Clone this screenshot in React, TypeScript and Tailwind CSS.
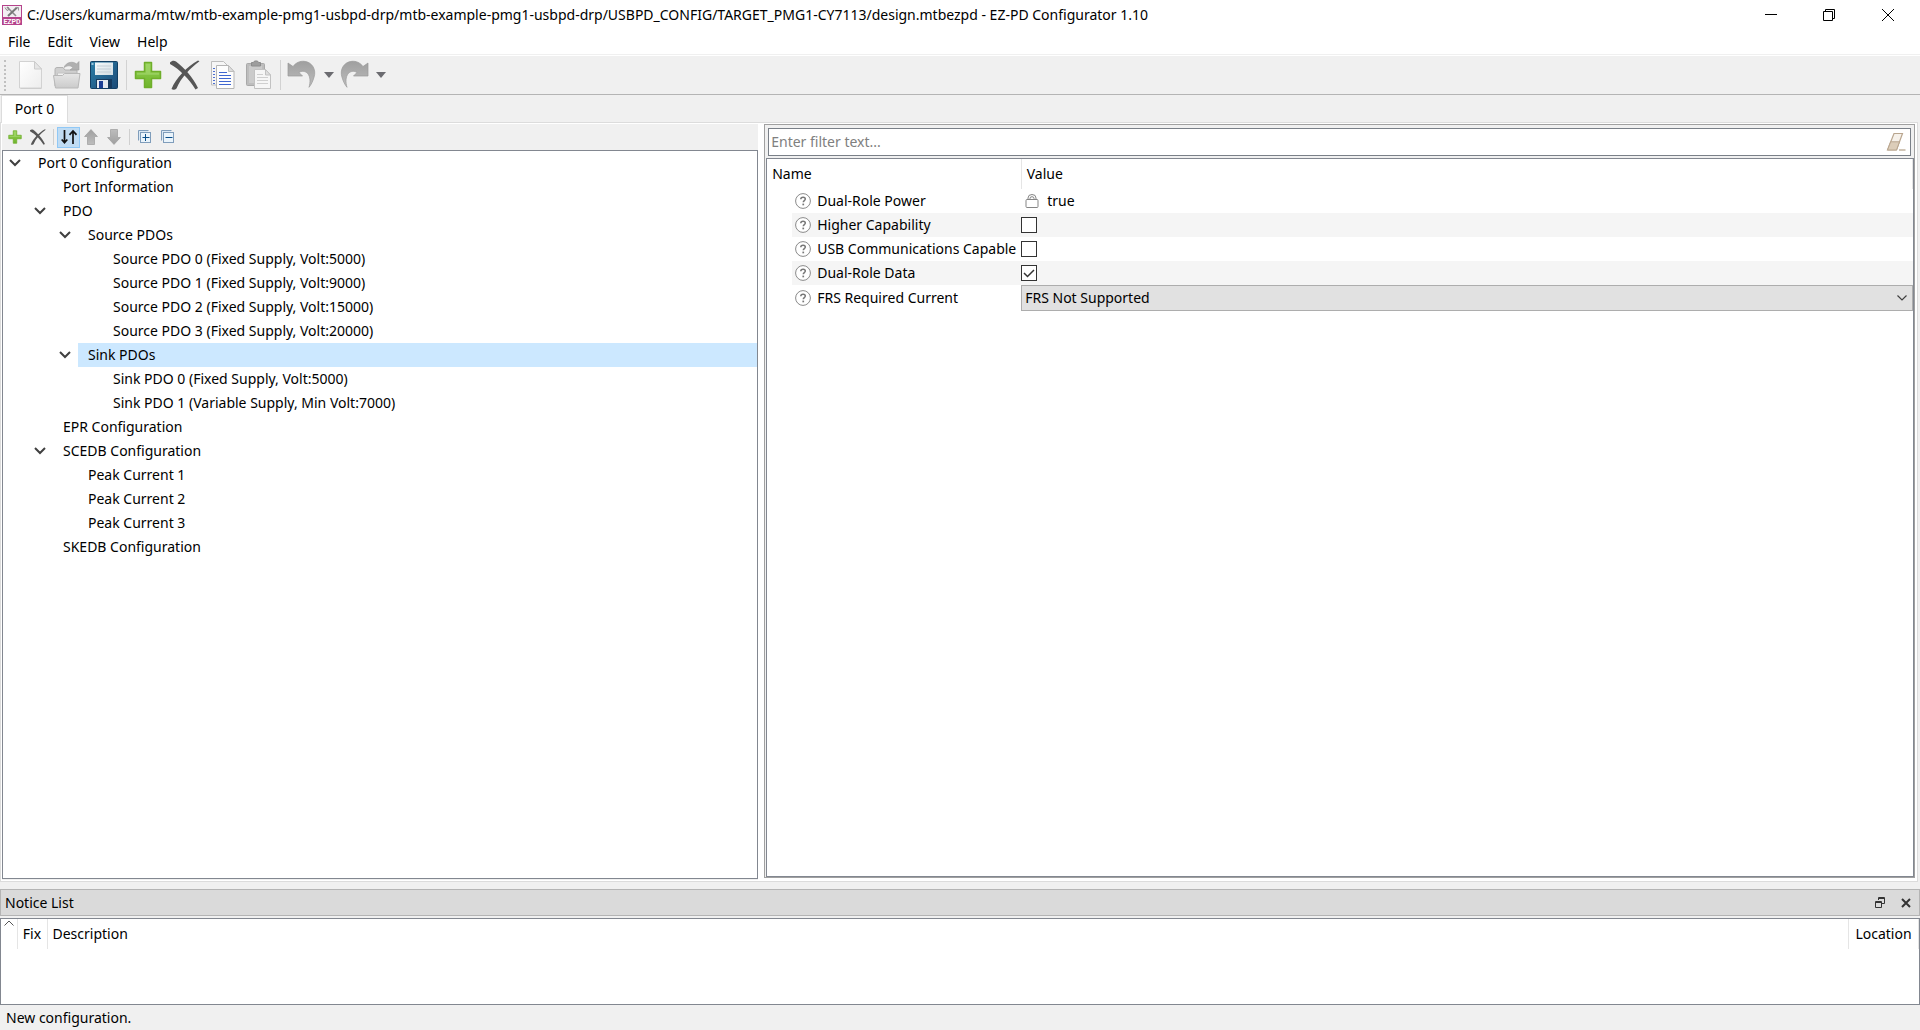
import React, { useState } from "react";

type Node = { label: string; children?: Node[]; open?: boolean };

const TREE: Node[] = [
  {
    label: "Port 0 Configuration",
    children: [
      { label: "Port Information" },
      {
        label: "PDO",
        children: [
          {
            label: "Source PDOs",
            children: [
              { label: "Source PDO 0 (Fixed Supply, Volt:5000)" },
              { label: "Source PDO 1 (Fixed Supply, Volt:9000)" },
              { label: "Source PDO 2 (Fixed Supply, Volt:15000)" },
              { label: "Source PDO 3 (Fixed Supply, Volt:20000)" },
            ],
          },
          {
            label: "Sink PDOs",
            children: [
              { label: "Sink PDO 0 (Fixed Supply, Volt:5000)" },
              { label: "Sink PDO 1 (Variable Supply, Min Volt:7000)" },
            ],
          },
        ],
      },
      { label: "EPR Configuration" },
      {
        label: "SCEDB Configuration",
        children: [{ label: "Peak Current 1" }, { label: "Peak Current 2" }, { label: "Peak Current 3" }],
      },
      { label: "SKEDB Configuration" },
    ],
  },
];

function AppLogo() {
  return (
    <svg width="20" height="20" viewBox="0 0 20 20" className="shrink-0" aria-hidden="true">
      <rect x="0.5" y="0.5" width="19" height="19" fill="#f3eef2" stroke="#b5438c" />
      <rect x="0" y="12" width="20" height="8" fill="#b5438c" />
      <path d="M5 2l9 9" stroke="#8a8a8a" strokeWidth="1.6" />
      <path d="M15 2.5L6 11" stroke="#777" strokeWidth="2" />
      <path d="M3 2.5l2 3 2-1-1-2.500" fill="none" stroke="#8a8a8a" />
      <path d="M13.500 2.500h3v3" fill="none" stroke="#999" />
      <text x="10" y="19" textAnchor="middle" fontSize="7" fontWeight="700" fill="#fff" fontFamily="Roboto, sans-serif">
        EZPD
      </text>
    </svg>
  );
}

function NewIcon() {
  return (
    <svg width="26" height="30" viewBox="0 0 26 30" aria-hidden="true">
      <path d="M2.500 2.500h15l6 6V29h-21z" fill="#c9c9c9" />
      <path d="M1.500 1.500h15l7 7.500v19h-22z" fill="url(#paper)" stroke="#d2d2d2" />
      <path d="M16.500 1.500v7.500h7z" fill="#e6e6e6" stroke="#cccccc" />
    </svg>
  );
}

function OpenIcon() {
  return (
    <svg width="30" height="30" viewBox="0 0 30 30" aria-hidden="true">
      <path d="M3 26V9.500q0-2 2-2h6l2 2.500h12v5" fill="#cfcfcf" stroke="#b2b2b2" />
      <path d="M5.500 13h19v5h-19z" fill="#f1f1f1" stroke="#c4c4c4" />
      <path d="M1.500 15.500h9l2-2h15.500l-2 14.500H3.500z" fill="url(#folder)" stroke="#b8b8b8" />
      <path d="M12 7.500C14 2 21 .8 24.500 4L27 1.500V10h-9l3-2.500C18.500 5 15 5.500 12 7.500z" fill="#b0b0b0" stroke="#9e9e9e" strokeWidth=".6" />
    </svg>
  );
}

function SaveIcon() {
  return (
    <svg width="28" height="28" viewBox="0 0 28 28" aria-hidden="true">
      <rect x=".5" y=".5" width="27" height="27" rx="1" fill="url(#disk)" stroke="#123f63" />
      <rect x="5" y="1.500" width="18" height="12.500" fill="url(#label)" />
      <path d="M7 5h14M7 8h14M7 11h14" stroke="#c3ced6" />
      <rect x="6" y="18" width="16" height="9" fill="#163a5e" />
      <path d="M7 19h11v8H7z" fill="#e4eaf0" />
      <rect x="9" y="20" width="4" height="7" fill="#1b3f95" />
      <rect x="1.500" y="2" width="2" height="2" fill="#9cc4dc" />
    </svg>
  );
}

function PlusIcon({ size }: { size: number }) {
  return (
    <svg width={size} height={size} viewBox="0 0 28 28" aria-hidden="true">
      <path d="M10.500 1.500h7v9h9v7h-9v9h-7v-9h-9v-7h9z" fill="url(#green)" stroke="#6fae2b" strokeWidth="1.500" strokeLinejoin="round" />
      <path d="M11.800 3h4.500v8.800H25v2H3v-2h8.800z" fill="#a6d873" opacity=".6" />
    </svg>
  );
}

function CrossIcon({ size }: { size: number }) {
  return (
    <svg width={size} height={size} viewBox="0 0 30 30" aria-hidden="true">
      <path d="M0 2.500C2 .5 4 .3 6 1.500c8 6 17 16 22 26.500l-2.500 1.500C19 19 10 9.500 0 4z" fill="#565656" />
      <path d="M28 .5l1.500.8C20 8.500 11 17.500 6.500 28.500 5 30 3 30 1.500 29 6 18 17 6.500 28 .5z" fill="#565656" />
    </svg>
  );
}

function CopyIcon() {
  return (
    <svg width="26" height="30" viewBox="0 0 26 30" aria-hidden="true">
      <path d="M1.500 1.500h12l4 4V25h-16z" fill="#f6f6f6" stroke="#bdbdbd" />
      <path d="M4 8v16" stroke="#4d6fd0" strokeWidth="2" strokeDasharray="1 2" />
      <path d="M6.500 5.500h12l5.500 6V28.500H6.500z" fill="#fdfdfd" stroke="#b5b5b5" />
      <path d="M18.500 5.500v6H24z" fill="#dedede" stroke="#bdbdbd" />
      <path d="M9 12.500h8M9 15.500h12M9 18.500h12M9 21.500h12M9 24.500h12" stroke="#3f66d0" />
    </svg>
  );
}

function PasteIcon() {
  return (
    <svg width="28" height="30" viewBox="0 0 28 30" aria-hidden="true">
      <rect x="1.500" y="3.500" width="18" height="22" rx="1" fill="#bdbdbd" stroke="#a9a9a9" />
      <rect x="4" y="6" width="13" height="17" fill="#cbcbcb" />
      <path d="M6.500 2.500h2l1-1.500h3l1 1.500h2V6h-9z" fill="#9d9d9d" stroke="#8c8c8c" />
      <path d="M9.500 9.500h11l5 5.500v13.500h-16z" fill="#f6f6f6" stroke="#c2c2c2" />
      <path d="M20.500 9.500V15h5z" fill="#dfdfdf" stroke="#c2c2c2" />
      <path d="M12 14.500h6M12 17.500h11M12 20.500h11M12 23.500h11" stroke="#cfcfcf" />
    </svg>
  );
}

function UndoIcon({ flip }: { flip?: boolean }) {
  return (
    <svg width="30" height="30" viewBox="0 0 30 30" aria-hidden="true">
      <g transform={flip ? "translate(30 0) scale(-1 1)" : undefined}>
        <path
          d="M1 3l5 3.500C9 2.500 13 1 17 1.300c8.500.7 12.500 8.700 10 16-1.200 4-2.800 7.500-5 10 1.500-5 1.500-10.500-1.300-13.800-2.500-2.500-6-2.800-8.700-1L15.500 16H1z"
          fill="url(#arrow)"
          stroke="#999"
          strokeWidth=".7"
        />
      </g>
    </svg>
  );
}

function Caret() {
  return (
    <svg width="10" height="6" viewBox="0 0 10 6" aria-hidden="true">
      <path d="M0 0h10L5 6z" fill="#6b6b70" />
    </svg>
  );
}

function SortIcon() {
  return (
    <svg width="16" height="16" viewBox="0 0 16 16" fill="none" stroke="#111" strokeWidth="1.700" aria-hidden="true">
      <path d="M3.500 1v13M.7 10.500l2.800 3.200 2.800-3.200" />
      <path d="M12 15V2M8.500 5.800L12 2l3.500 3.800" />
    </svg>
  );
}

function BlockArrow({ down }: { down?: boolean }) {
  return (
    <svg width="14" height="16" viewBox="0 0 14 16" aria-hidden="true">
      <path
        transform={down ? "translate(0 16) scale(1 -1)" : undefined}
        d="M7 .6L13.400 7.500H10.500v8h-7v-8H.6z"
        fill="url(#arrow)"
        stroke="#a3a3a3"
        strokeWidth=".8"
      />
    </svg>
  );
}

function FoldIcon({ plus }: { plus?: boolean }) {
  return (
    <svg width="14" height="14" viewBox="0 0 14 14" aria-hidden="true">
      <path d="M.5 10.500V.5h10" fill="none" stroke="#7f9dbb" />
      <path d="M1 1h9v2H3v7H1z" fill="#dbe8f3" />
      <rect x="2.500" y="2.500" width="10" height="10" fill="#eaf4fb" stroke="#7f9dbb" />
      <path d="M4.500 7.500h7" stroke="#0b4f8a" />
      {plus && <path d="M7.500 4v7" stroke="#0b4f8a" />}
    </svg>
  );
}

function Chevron({ open }: { open: boolean }) {
  return (
    <svg width="12" height="8" viewBox="0 0 12 8" fill="none" stroke="#404040" strokeWidth="2" className={open ? "" : "-rotate-90"} aria-hidden="true">
      <path d="M1 1l5 5 5-5" />
    </svg>
  );
}

function HelpIcon() {
  return (
    <svg width="16" height="16" viewBox="0 0 16 16" className="shrink-0" aria-hidden="true">
      <circle cx="8" cy="8" r="7.400" fill="#fff" stroke="#8a8a8a" strokeWidth="1" />
      <path d="M5.800 6.300c0-1.400 1-2.100 2.300-2.100 1.200 0 2.200.7 2.200 1.900 0 1.500-2 1.500-2 3.200" fill="none" stroke="#777" strokeWidth="1.500" />
      <rect x="7.400" y="10.600" width="1.700" height="1.700" fill="#777" />
    </svg>
  );
}

function LockIcon() {
  return (
    <svg width="14" height="14" viewBox="0 0 14 14" fill="none" stroke="#858585" aria-hidden="true">
      <path d="M3 5.500V4a4 3.500 0 018 0v1.500M5 5.500V4.500a2 1.800 0 014 0v1" />
      <rect x="1" y="5.500" width="12" height="8" rx="1" fill="#fff" />
    </svg>
  );
}

function EraserIcon() {
  return (
    <svg width="20" height="20" viewBox="0 0 20 20" aria-hidden="true">
      <path d="M8 1.500h8.500L10.500 18H1.500z" fill="#f6f1ea" stroke="#b9a68f" strokeWidth="1.200" />
      <path d="M4.700 9.800h8.800L10.500 18H1.500z" fill="#dccdb9" stroke="#b9a68f" />
      <path d="M13 18h6.500" stroke="#c2b39f" strokeWidth="1.500" />
    </svg>
  );
}

function ToolButton({ label, className, children }: { label: string; className: string; children: React.ReactNode }) {
  return (
    <button type="button" aria-label={label} className={`flex shrink-0 items-center justify-center ${className}`}>
      {children}
    </button>
  );
}

function TreeItem({ node, level, selected, onSelect }: { node: Node; level: number; selected: string; onSelect: (s: string) => void }) {
  const [open, setOpen] = useState(true);
  const isSelected = selected === node.label;
  return (
    <li role="treeitem" aria-selected={isSelected} aria-expanded={node.children ? open : undefined}>
      <div className="flex h-6">
        <div className="shrink-0" style={{ width: level * 25 }} />
        <div className="flex w-[25px] shrink-0">
          {node.children && (
            <button type="button" aria-label={`Toggle ${node.label}`} onClick={() => setOpen(!open)} className="flex w-6 items-center justify-center">
              <Chevron open={open} />
            </button>
          )}
        </div>
        <button
          type="button"
          onClick={() => onSelect(node.label)}
          className={`flex-1 px-2.5 text-left whitespace-nowrap ${isSelected ? "bg-[#cce8ff]" : ""}`}
        >
          {node.label}
        </button>
      </div>
      {node.children && open && (
        <ul role="group">
          {node.children.map((c) => (
            <TreeItem key={c.label} node={c} level={level + 1} selected={selected} onSelect={onSelect} />
          ))}
        </ul>
      )}
    </li>
  );
}

function CheckBox({ id, initial }: { id: string; initial: boolean }) {
  const [checked, setChecked] = useState(initial);
  return (
    <span className="relative block size-4">
      <input id={id} type="checkbox" checked={checked} onChange={() => setChecked(!checked)} className="block size-4 appearance-none border border-[#333333] bg-white" />
      {checked && (
        <svg width="16" height="16" viewBox="0 0 16 16" fill="none" stroke="#333" strokeWidth="1.500" className="pointer-events-none absolute inset-0" aria-hidden="true">
          <path d="M3 8l3.500 3.500L13 5" />
        </svg>
      )}
    </span>
  );
}

function NameCell({ label, id, shade }: { label: string; id?: string; shade?: boolean }) {
  return (
    <td className="p-0 pl-[25px]">
      <div className={`flex h-6 items-center gap-1.5 pl-[3px] whitespace-nowrap ${shade ? "bg-[#f5f5f5]" : ""}`}>
        <HelpIcon />
        {id ? <label htmlFor={id}>{label}</label> : <span>{label}</span>}
      </div>
    </td>
  );
}

function Gradients() {
  return (
    <svg width="0" height="0" className="absolute" aria-hidden="true">
      <defs>
        <linearGradient id="paper" x1="0" y1="0" x2="1" y2="1">
          <stop offset="0" stopColor="#ffffff" />
          <stop offset="1" stopColor="#ededed" />
        </linearGradient>
        <linearGradient id="folder" x1="0" y1="0" x2="0" y2="1">
          <stop offset="0" stopColor="#e6e6e6" />
          <stop offset="1" stopColor="#cbcbcb" />
        </linearGradient>
        <linearGradient id="disk" x1="0" y1="0" x2="1" y2="1">
          <stop offset="0" stopColor="#2c7fa8" />
          <stop offset="1" stopColor="#1b4a77" />
        </linearGradient>
        <linearGradient id="label" x1="0" y1="0" x2="1" y2="1">
          <stop offset="0" stopColor="#f6fafb" />
          <stop offset="1" stopColor="#d2dde3" />
        </linearGradient>
        <linearGradient id="green" x1="0" y1="0" x2="0" y2="1">
          <stop offset="0" stopColor="#93cf52" />
          <stop offset="1" stopColor="#6fb52c" />
        </linearGradient>
        <linearGradient id="arrow" x1="0" y1="0" x2="0" y2="1">
          <stop offset="0" stopColor="#9f9f9f" />
          <stop offset="1" stopColor="#bdbdbd" />
        </linearGradient>
      </defs>
    </svg>
  );
}

export default function App() {
  const [selected, setSelected] = useState("Sink PDOs");
  const [filter, setFilter] = useState("");
  return (
    <div className="flex h-screen flex-col overflow-hidden bg-[#f0f0f0] font-['Noto_Sans','Open_Sans',sans-serif] text-sm leading-6 text-black">
      <Gradients />
      <header className="shrink-0 border-b border-[#f0f0f0] bg-white">
        <div className="flex h-[29px] items-center pl-0.5">
          <AppLogo />
          <h1 className="ml-[5px] flex-1 whitespace-nowrap">
            C:/Users/kumarma/mtw/mtb-example-pmg1-usbpd-drp/mtb-example-pmg1-usbpd-drp/USBPD_CONFIG/TARGET_PMG1-CY7113/design.mtbezpd - EZ-PD Configurator 1.10
          </h1>
          <ToolButton label="Minimize" className="h-7 w-[58px]">
            <svg width="12" height="12" viewBox="0 0 12 12" stroke="#000" aria-hidden="true">
              <path d="M0 5.500h12" />
            </svg>
          </ToolButton>
          <ToolButton label="Restore" className="h-7 w-[58px]">
            <svg width="12" height="12" viewBox="0 0 12 12" fill="none" stroke="#000" aria-hidden="true">
              <path d="M.5 2.500h9v9h-9zM2.500 2.500v-2h9v9h-2" />
            </svg>
          </ToolButton>
          <ToolButton label="Close" className="mr-0.5 h-7 w-[60px]">
            <svg width="12" height="12" viewBox="0 0 12 12" stroke="#000" aria-hidden="true">
              <path d="M0 0l12 12M12 0L0 12" />
            </svg>
          </ToolButton>
        </div>
        <nav className="flex h-[25px] items-center gap-[17px] pl-2">
          <button type="button">File</button>
          <button type="button">Edit</button>
          <button type="button">View</button>
          <button type="button">Help</button>
        </nav>
      </header>

      <div className="flex h-10 shrink-0 items-center border-t border-b border-t-white border-b-[#b4b4b4]">
        <div className="ml-1 h-[31px] border-l-2 border-dotted border-[#c0c0c0]" />
        <ToolButton label="New" className="ml-3 w-[26px]"><NewIcon /></ToolButton>
        <ToolButton label="Open" className="ml-2 w-[30px]"><OpenIcon /></ToolButton>
        <ToolButton label="Save" className="ml-2 w-7"><SaveIcon /></ToolButton>
        <div className="ml-2 h-[30px] w-px bg-[#d2d2d2]" />
        <ToolButton label="Add" className="ml-[7px] w-7"><PlusIcon size={28} /></ToolButton>
        <ToolButton label="Remove" className="ml-2 w-[30px]"><CrossIcon size={30} /></ToolButton>
        <ToolButton label="Copy" className="ml-2 w-[30px]"><CopyIcon /></ToolButton>
        <ToolButton label="Paste" className="ml-[7px] w-7"><PasteIcon /></ToolButton>
        <div className="ml-[7px] h-[30px] w-px bg-[#d2d2d2]" />
        <ToolButton label="Undo" className="ml-1.5 w-[30px]"><UndoIcon /></ToolButton>
        <ToolButton label="Undo history" className="ml-[7px] w-2.5"><Caret /></ToolButton>
        <ToolButton label="Redo" className="ml-[5px] w-[30px]"><UndoIcon flip /></ToolButton>
        <ToolButton label="Redo history" className="ml-[7px] w-2.5"><Caret /></ToolButton>
      </div>

      <div className="flex h-[27px] shrink-0 items-stretch" role="tablist">
        <button type="button" role="tab" aria-selected="true" className="z-10 -mb-px ml-px w-[67px] border border-b-0 border-[#dcdcdc] bg-white pb-0.5 text-center">
          Port 0
        </button>
      </div>

      <main className="mr-0.5 flex min-h-0 flex-1 gap-1.5 border border-[#dcdcdc] bg-white p-px">
        <section className="flex flex-[757_1_0] flex-col bg-[#f0f0f0]">
          <div className="flex h-[26px] shrink-0 items-center">
            <ToolButton label="Add item" className="ml-1.5 w-3.5"><PlusIcon size={14} /></ToolButton>
            <ToolButton label="Remove item" className="ml-2 w-4"><CrossIcon size={16} /></ToolButton>
            <div className="ml-[7px] h-4 w-px bg-[#cfcfcf]" />
            <ToolButton label="Sort" className="ml-[3px] h-[21px] w-[23px] border border-[#90c8f6] bg-[#c0dcf3]"><SortIcon /></ToolButton>
            <ToolButton label="Move up" className="ml-1 w-3.5"><BlockArrow /></ToolButton>
            <ToolButton label="Move down" className="ml-[9px] w-3.5"><BlockArrow down /></ToolButton>
            <div className="ml-2 h-4 w-px bg-[#cfcfcf]" />
            <ToolButton label="Expand all" className="ml-2 w-3.5"><FoldIcon plus /></ToolButton>
            <ToolButton label="Collapse all" className="ml-[9px] w-3.5"><FoldIcon /></ToolButton>
          </div>
          <ul role="tree" aria-label="Configuration" className="mb-px min-h-0 flex-1 overflow-hidden border border-[#828790] bg-white">
            {TREE.map((n) => (
              <TreeItem key={n.label} node={n} level={0} selected={selected} onSelect={setSelected} />
            ))}
          </ul>
        </section>

        <section className="mr-px mb-0.5 flex flex-[1150_1_0] flex-col border border-[#a0a0a0] bg-[#f0f0f0]">
          <div className="mx-[3px] mt-[3px] mb-0.5 flex h-7 shrink-0 items-center border border-[#7a8088] bg-white pr-1">
            <input
              aria-label="Filter"
              placeholder="Enter filter text..."
              value={filter}
              onChange={(e) => setFilter(e.target.value)}
              className="h-6 min-w-0 flex-1 px-0.5 outline-none placeholder:text-[#808080]"
            />
            <button type="button" aria-label="Clear filter" onClick={() => setFilter("")}>
              <EraserIcon />
            </button>
          </div>
          <div className="ml-px min-h-0 flex-1 border border-[#828790] bg-white">
            <table className="w-full table-fixed border-collapse">
              <thead>
                <tr className="h-[30px]">
                  <th className="w-[254px] border-r border-[#e5e5e5] p-0 pl-[5px] text-left font-normal">Name</th>
                  <th className="border-r border-[#e5e5e5] p-0 pl-[5px] text-left font-normal">Value</th>
                </tr>
              </thead>
              <tbody>
                <tr>
                  <NameCell label="Dual-Role Power" />
                  <td className="p-0">
                    <div className="flex h-6 items-center gap-2 pl-1"><LockIcon />true</div>
                  </td>
                </tr>
                <tr>
                  <NameCell label="Higher Capability" id="higher" shade />
                  <td className="bg-[#f5f5f5] p-0"><CheckBox id="higher" initial={false} /></td>
                </tr>
                <tr>
                  <NameCell label="USB Communications Capable" id="usb" />
                  <td className="p-0"><CheckBox id="usb" initial={false} /></td>
                </tr>
                <tr>
                  <NameCell label="Dual-Role Data" id="drd" shade />
                  <td className="bg-[#f5f5f5] p-0"><CheckBox id="drd" initial /></td>
                </tr>
                <tr>
                  <NameCell label="FRS Required Current" id="frs" />
                  <td className="p-0">
                    <div className="relative">
                      <select id="frs" className="block h-[26px] w-full appearance-none border border-[#adadad] bg-[#e1e1e1] px-[3px] leading-6">
                        <option>FRS Not Supported</option>
                      </select>
                      <svg width="10" height="6" viewBox="0 0 10 6" fill="none" stroke="#404040" strokeWidth="1.200" className="pointer-events-none absolute top-2.5 right-1.5" aria-hidden="true">
                        <path d="M.5 .5L5 5 9.500.5" />
                      </svg>
                    </div>
                  </td>
                </tr>
              </tbody>
            </table>
          </div>
        </section>
      </main>

      <section className="mt-[7px] flex shrink-0 flex-col">
        <div className="flex h-[27px] items-center border border-[#b4b4b4] bg-[#dadada] pl-1">
          <h2 className="flex-1">Notice List</h2>
          <ToolButton label="Float" className="size-5">
            <svg width="10" height="11" viewBox="0 0 10 11" fill="none" stroke="#333" aria-hidden="true">
              <path d="M3.500 3V.5h6v6H7M3 1.500h7" />
              <path d="M.5 4.500h6v6h-6zM0 5.500h7" />
            </svg>
          </ToolButton>
          <ToolButton label="Close notice list" className="mr-[3px] ml-1.5 size-5">
            <svg width="10" height="10" viewBox="0 0 10 10" stroke="#333" strokeWidth="2" aria-hidden="true">
              <path d="M1 1l8 8M9 1L1 9" />
            </svg>
          </ToolButton>
        </div>
        <div className="mt-0.5 h-[87px] border border-[#828790] bg-white">
          <table className="w-full table-fixed border-collapse">
            <thead>
              <tr className="h-[30px]">
                <th className="w-4 border-r border-[#e5e5e5] p-0 align-top font-normal" aria-label="Severity">
                  <svg width="10" height="6" viewBox="0 0 10 6" fill="none" stroke="#555" className="mx-auto mt-px" aria-hidden="true">
                    <path d="M.5 5.500L5 1l4.500 4.500" />
                  </svg>
                </th>
                <th className="w-[30px] border-r border-[#e5e5e5] p-0 text-center font-normal">Fix</th>
                <th className="border-r border-[#e5e5e5] p-0 pl-[5px] text-left font-normal">Description</th>
                <th className="w-[70px] border-r border-[#e5e5e5] p-0 text-center font-normal">Location</th>
              </tr>
            </thead>
          </table>
        </div>
      </section>

      <footer className="h-[25px] shrink-0 pl-1.5 leading-[26px]">New configuration.</footer>
    </div>
  );
}
